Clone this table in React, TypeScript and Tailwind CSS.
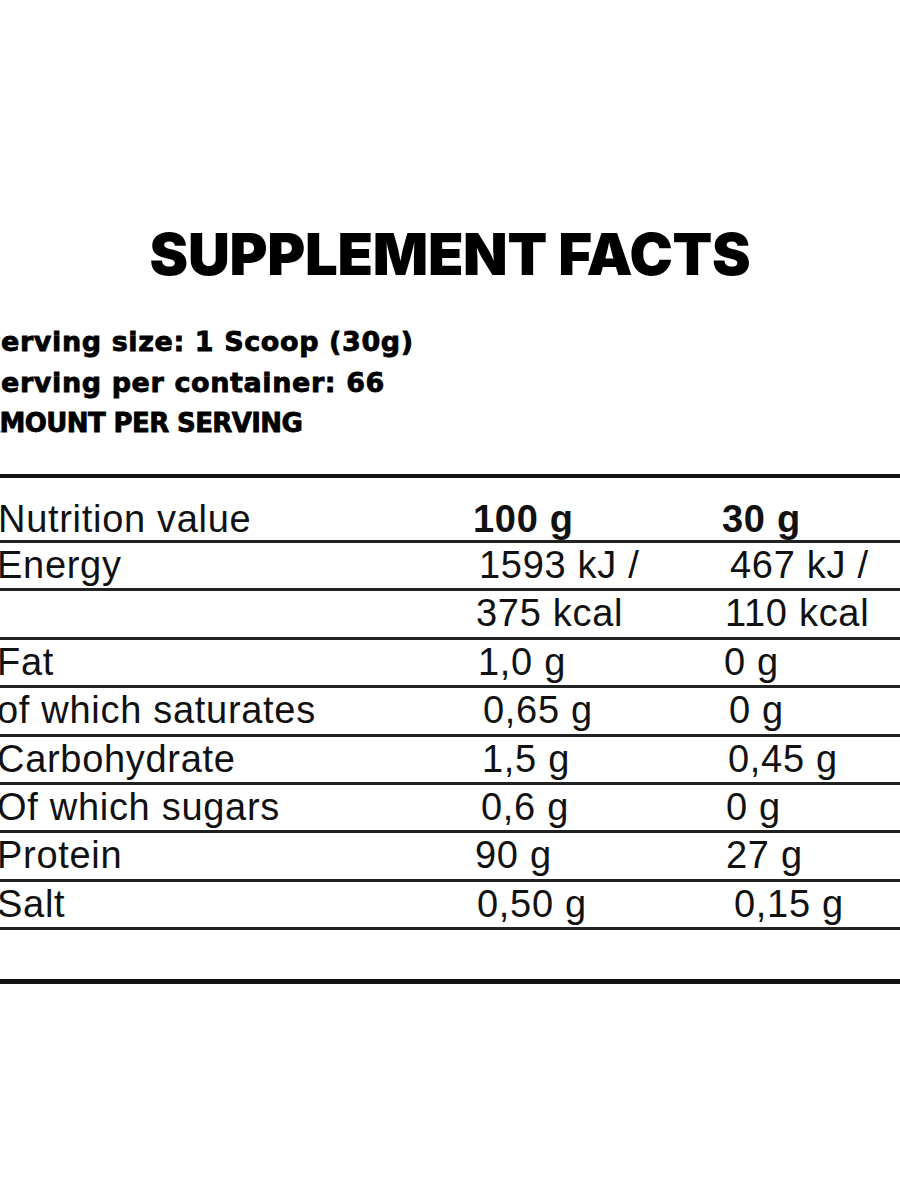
const rows: { label: string; a: string; b: string; pa: string; pb: string }[] = [
  { label: "Energy", a: "1593 kJ /", b: "467 kJ /", pa: "pl-[9px]", pb: "pl-[10px]" },
  { label: "", a: "375 kcal", b: "110 kcal", pa: "pl-[6px]", pb: "pl-[5px]" },
  { label: "Fat", a: "1,0 g", b: "0 g", pa: "pl-[8px]", pb: "pl-[4px]" },
  { label: "of which saturates", a: "0,65 g", b: "0 g", pa: "pl-[13px]", pb: "pl-[9px]" },
  { label: "Carbohydrate", a: "1,5 g", b: "0,45 g", pa: "pl-[12px]", pb: "pl-[8px]" },
  { label: "Of which sugars", a: "0,6 g", b: "0 g", pa: "pl-[11px]", pb: "pl-[6px]" },
  { label: "Protein", a: "90 g", b: "27 g", pa: "pl-[5px]", pb: "pl-[6px]" },
  { label: "Salt", a: "0,50 g", b: "0,15 g", pa: "pl-[7px]", pb: "pl-[14px]" },
]

export default function App() {
  return (
    <div className="h-[1200px] w-[900px] overflow-hidden bg-white text-[#111]">
      <h1 className="pt-[225px] text-center font-['Inter',sans-serif] text-[58px] font-black leading-none tracking-[-0.3px] text-black">
        SUPPLEMENT FACTS
      </h1>

      <div className="-ml-[19px] mt-[38px] font-['DejaVu_Sans',sans-serif] text-[27px] font-bold leading-[41px] tracking-[0.6px] text-black [-webkit-text-stroke:0.8px_black]">
        <p className="whitespace-nowrap">Serving size: 1 Scoop (30g)</p>
        <p className="whitespace-nowrap">Serving per container: 66</p>
        <p className="-ml-[1px] whitespace-nowrap text-[26px] tracking-[-0.6px]">AMOUNT PER SERVING</p>
      </div>

      <div className="mt-[30px] border-t-4 border-[#111] font-['Liberation_Sans',Arial,sans-serif] text-[38px] tracking-[0.7px]">
        <div className="grid h-[65px] grid-cols-[470px_250px_1fr] border-b-[3px] border-[#222] pt-[20px] leading-[42px]">
          <span className="-ml-[2px] whitespace-nowrap">Nutrition value</span>
          <span className="pl-[3px] font-bold whitespace-nowrap">100 g</span>
          <span className="pl-[2px] font-bold whitespace-nowrap">30 g</span>
        </div>
        {rows.map((r, i) => (
          <div
            key={i}
            className="grid h-[48.4px] grid-cols-[470px_250px_1fr] border-b-[3px] border-[#222] leading-[45px]"
          >
            <span className="-ml-[3px] whitespace-nowrap">{r.label}</span>
            <span className={`${r.pa} whitespace-nowrap`}>{r.a}</span>
            <span className={`${r.pb} whitespace-nowrap`}>{r.b}</span>
          </div>
        ))}
        <div className="h-[54px] border-b-[5px] border-[#111]" />
      </div>
    </div>
  )
}
